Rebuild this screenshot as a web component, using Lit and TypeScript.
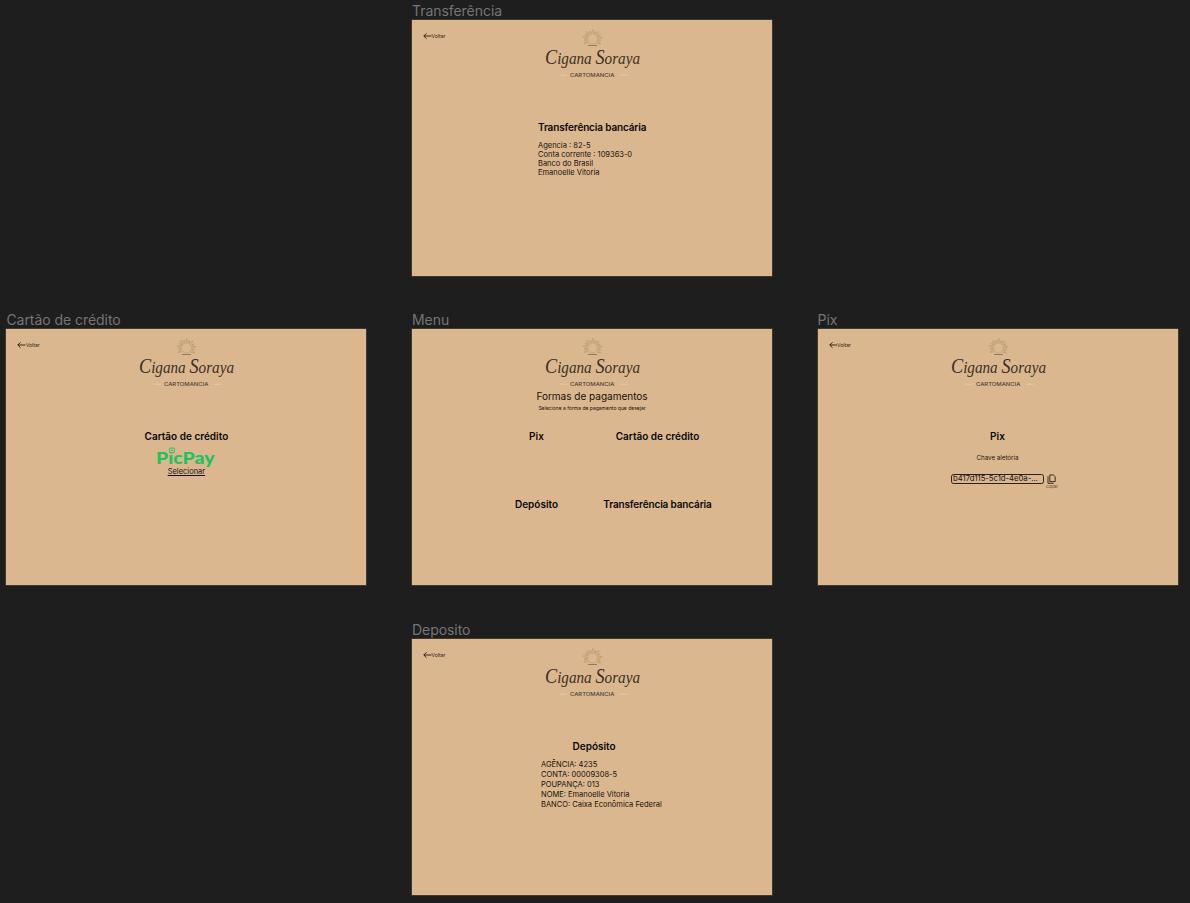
import { LitElement, html, svg, css, nothing } from "lit";
import { customElement, property } from "lit/decorators.js";

const RAYS = Array.from({ length: 13 }, (_, i) => -210 + i * 20);

@customElement("brand-logo")
class BrandLogo extends LitElement {
  static styles = css`
    :host { display: block; width: 100px; height: 60px; }
    svg { display: block; overflow: visible; }
    .sun { fill: none; stroke: #bf9f75; stroke-width: 0.8; }
    .ray { fill: none; stroke: #c2a176; stroke-width: 0.9; }
    .base { stroke: #927a58; stroke-width: 1; }
    .script { font: italic 17.5px "Liberation Serif", cursive; fill: #3a3025; }
    .cap { font-size: 21px; }
    .tag { font: 500 5px Inter, sans-serif; fill: #4d4233; }
    .rule { stroke: #eacfaa; stroke-width: 0.8; }
  `;
  render() {
    return html`<svg width="100" height="60" viewBox="0 0 100 60">
      <circle class="sun" cx="50.5" cy="19" r="5"></circle>
      ${RAYS.map((a, i) => svg`<path class="ray" transform="rotate(${a} 50.5 19)" d=${i % 2 ? "M56 18.5l2.8.8-2.8.8" : "M56.3 18.3l4 1-4 1"}></path>`)}
      <path class="base" d="M46 25.5h9"></path>
      <text class="script" x="3" y="43.6" textLength="95" lengthAdjust="spacingAndGlyphs"><tspan class="cap">C</tspan>igana <tspan class="cap">S</tspan>oraya</text>
      <text class="tag" x="28" y="57" textLength="44.3" lengthAdjust="spacingAndGlyphs">CARTOMANCIA</text>
      <path class="rule" d="M17.5 55.2h7.5M78 55.2h7.5"></path>
    </svg>`;
  }
}

@customElement("app-screen")
class AppScreen extends LitElement {
  @property() name = "";
  @property({ type: Boolean }) back = false;
  static styles = css`
    :host { display: block; width: 360px; font-family: Inter, sans-serif; }
    .name { height: 20px; line-height: 21px; font-size: 14px; color: #757575; white-space: nowrap; letter-spacing: -0.05px; }
    .frame { width: 360px; height: 256px; background: #dbb78f; box-shadow: 0 0 0 0.5px #65553f; }
    .head { display: grid; grid-template-columns: 130px 100px 1fr; height: 62.7px; }
    .back { display: flex; align-items: center; height: 8px; margin: 11.5px 0 0 11px; font-size: 5px; line-height: 8px; color: #1d1812; }
    .back svg { display: block; flex: none; }
  `;
  render() {
    return html`<div class="name">${this.name}</div>
      <div class="frame">
        <div class="head">
          <div>${this.back
            ? html`<div class="back"><svg width="8.5" height="8" viewBox="0 0 8.5 8" fill="none" stroke="#1d1812" stroke-width=".9"><path d="M8.5 4H.8M3.5 1.3L.8 4l2.7 2.7"></path></svg><span>Voltar</span></div>`
            : nothing}</div>
          <brand-logo></brand-logo>
        </div>
        <slot></slot>
      </div>`;
  }
}

@customElement("app-root")
class AppRoot extends LitElement {
  static styles = css`
    :host { display: block; position: relative; width: 1190px; height: 903px; overflow: hidden; background: #1e1e1e; font-family: Inter, sans-serif; color: #15110c; }
    app-screen { position: absolute; }
    .top { left: 412px; top: 0; }
    .left { left: 6.4px; top: 309.4px; }
    .mid { left: 412px; top: 309.4px; }
    .right { left: 817.5px; top: 309.4px; }
    .bottom { left: 412px; top: 619px; }
    h2 { margin: 0; font-size: 10px; line-height: 12px; font-weight: 600; color: #0b0906; white-space: nowrap; }
    .tight { letter-spacing: -0.15px; }
    .lines { font-size: 7.5px; white-space: nowrap; }
    .transfer { padding: 38px 0 0 126px; }
    .transfer .lines { margin-top: 8.3px; line-height: 9px; }
    .deposit { padding: 38px 0 0 129px; }
    .deposit h2 { padding-left: 31.5px; }
    .deposit .lines { margin-top: 8.3px; line-height: 10px; }
    .card { display: flex; flex-direction: column; align-items: center; padding-top: 38px; }
    .picpay { display: block; margin-top: 6px; overflow: visible; }
    .pp { font: 900 17px Lato, sans-serif; fill: #21c25e; }
    .select { font-size: 7.5px; line-height: 9px; text-decoration: underline; margin-top: -2px; }
    .menu { display: flex; flex-direction: column; align-items: center; margin-top: -1.7px; }
    .title { font-size: 10px; line-height: 12px; }
    .sub { font-size: 5px; line-height: 6px; margin-top: 3px; }
    .options { display: grid; grid-template-columns: 121px 121px; grid-template-rows: 12px 12px; row-gap: 56px; justify-items: center; margin: 19px 0 0 10px; }
    .pix { display: flex; flex-direction: column; align-items: center; padding-top: 38px; }
    .hint { font-size: 6.2px; line-height: 8px; margin-top: 12px; }
    .row { display: flex; align-items: flex-start; margin: 12px 0 0 14px; gap: 2px; }
    .key { box-sizing: border-box; width: 93px; height: 10px; border: 1px solid #2a2219; border-radius: 2.5px; padding: 0 1px; font-size: 7.7px; line-height: 8.5px; white-space: nowrap; }
    .copy { display: flex; flex-direction: column; align-items: center; font-size: 3.8px; line-height: 5px; color: #50422f; }
    .copy svg { display: block; }
  `;
  render() {
    return html`
      <app-screen class="top" name="Transferência" back>
        <div class="transfer"><h2 class="tight">Transferência bancária</h2>
          <div class="lines"><div>Agencia : 82-5</div><div>Conta corrente : 109363-0</div><div>Banco do Brasil</div><div>Emanoelle Vitoria</div></div>
        </div>
      </app-screen>
      <app-screen class="left" name="Cartão de crédito" back>
        <div class="card"><h2>Cartão de crédito</h2>
          <svg class="picpay" width="60" height="21" viewBox="0 0 60 21">
            <text class="pp" x="0" y="15.5" textLength="58.5" lengthAdjust="spacingAndGlyphs">PicPay</text>
            <rect x="12.4" y="-.5" width="6.6" height="6" fill="#dbb78f"></rect>
            <path d="M13.6 0h4.6v4.6h-4.6z" fill="none" stroke="#21c25e" stroke-width=".9"></path>
            <path d="M15.2 1.6h1.4v1.4h-1.4z" fill="#21c25e"></path>
          </svg>
          <div class="select">Selecionar</div>
        </div>
      </app-screen>
      <app-screen class="mid" name="Menu">
        <div class="menu"><div class="title">Formas de pagamentos</div><div class="sub">Selecione a forma de pagamento que desejar</div>
          <div class="options"><h2>Pix</h2><h2>Cartão de crédito</h2><h2>Depósito</h2><h2 class="tight">Transferência bancária</h2></div>
        </div>
      </app-screen>
      <app-screen class="right" name="Pix" back>
        <div class="pix"><h2>Pix</h2><div class="hint">Chave aletória</div>
          <div class="row"><div class="key">b417d115-5c1d-4e0a-...</div>
            <div class="copy"><svg width="9" height="10" viewBox="0 0 9 10" fill="none" stroke="#2a2219" stroke-width=".9"><path d="M2.8.9h3.5l1.9 1.9v4.8H2.8zM1 2.3v7h5.5"></path></svg><span>Copiar</span></div>
          </div>
        </div>
      </app-screen>
      <app-screen class="bottom" name="Deposito" back>
        <div class="deposit"><h2>Depósito</h2>
          <div class="lines"><div>AGÊNCIA: 4235</div><div>CONTA: 00009308-5</div><div>POUPANÇA: 013</div><div>NOME: Emanoelle Vitoria</div><div>BANCO: Caixa Econômica Federal</div></div>
        </div>
      </app-screen>`;
  }
}
